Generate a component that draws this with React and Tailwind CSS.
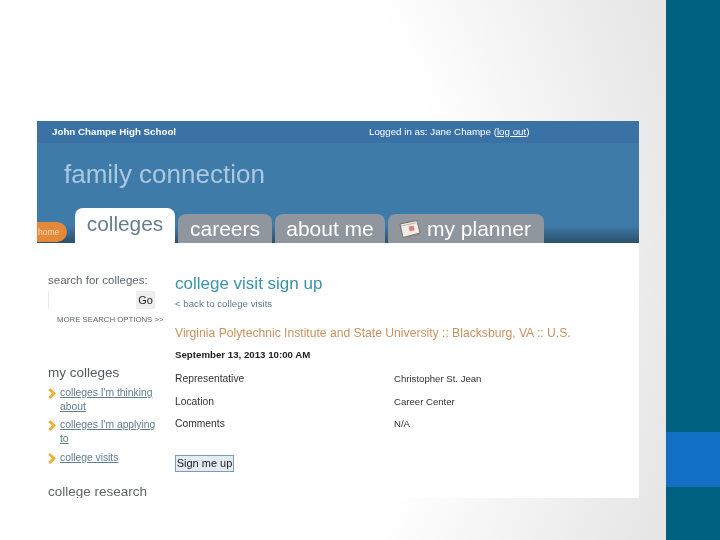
const tabs = [
  { label: "careers", width: "w-[94px]" },
  { label: "about me", width: "w-[110px]" },
];

const collegeLinks = [
  { lines: ["colleges I'm thinking", "about"], rowClass: "h-[32px]" },
  { lines: ["colleges I'm applying", "to"], rowClass: "h-[33px]" },
  { lines: ["college visits"], rowClass: "h-[16px]" },
];

const details = [
  { label: "Representative", value: "Christopher St. Jean" },
  { label: "Location", value: "Career Center" },
  { label: "Comments", value: "N/A" },
];

const Chevron = () => (
  <svg width="8" height="11" viewBox="0 0 8 11" className="mt-[2px] shrink-0">
    <path d="M1.2 1 L6 5.5 L1.2 10" fill="none" stroke="#eeb02f" strokeWidth="2.6" />
  </svg>
);

const PlannerIcon = () => (
  <svg width="22" height="20" viewBox="0 0 22 20" className="shrink-0">
    <path d="M1 5 L18 1.5 L21 14 L4 18.5 Z" fill="#f0ede8" stroke="#77706a" strokeWidth="1" />
    <path d="M2 7 L18.5 3.5" stroke="#b9b3ab" strokeWidth="1" />
    <rect x="10" y="7" width="5" height="5" fill="#d9817b" transform="rotate(-12 12 9)" />
    <path d="M4 18.5 L21 14 L21 15.5 L5 19.5 Z" fill="#8c8780" />
  </svg>
);

const Header = () => (
  <div className="bg-[#3e7ba8]">
    <div className="flex h-[22px] items-center bg-[#3a72a6] pl-[15px] text-[9.75px] text-white">
      <span className="w-[317px] font-bold">John Champe High School</span>
      <span>
        Logged in as: Jane Champe (<span className="underline">log out</span>)
      </span>
    </div>
    <div className="h-[65px] pl-[27px] pt-[16px] text-[26px] leading-[30px] text-[#a9c8e1]">
      family connection
    </div>
    <div className="flex h-[35px] items-end bg-gradient-to-b from-[#3e7ba8] from-50% to-[#2b506c]">
      <div className="mb-px flex h-[20px] w-[30px] items-center rounded-r-[10px] bg-[#e4883a] pl-px text-[8.5px] text-[#f8dcc0]">
        home
      </div>
      <div className="ml-2 flex h-[35px] w-[100px] justify-center rounded-t-[8px] bg-white pt-[4px] text-[20.8px] leading-[24px] text-[#64808c]">
        colleges
      </div>
      <div className="ml-[3px] flex gap-[3px]">
        {tabs.map((tab) => (
          <div
            key={tab.label}
            className={`flex h-[29px] items-center justify-center rounded-t-[8px] bg-[#8f969e] text-[21px] text-white ${tab.width}`}
          >
            {tab.label}
          </div>
        ))}
        <div className="flex h-[29px] w-[156px] items-center gap-[6px] rounded-t-[8px] bg-[#8f969e] pl-[11px] text-[21px] text-white">
          <PlannerIcon />
          my planner
        </div>
      </div>
    </div>
  </div>
);

const Sidebar = () => (
  <div className="w-[138px] shrink-0 pl-[11px] pt-[30px] text-[#5f6468]">
    <div className="text-[11.5px] leading-[14px]">search for colleges:</div>
    <div className="mt-[4px] flex h-[18px] items-center">
      <div className="h-[18px] w-[85px] border-l border-[#e8e8e8] bg-white" />
      <div className="ml-[3px] flex h-[18px] w-[19px] items-center justify-center bg-[#ededed] text-[11px] text-[#222222]">
        Go
      </div>
    </div>
    <div className="ml-[9px] mt-[5px] whitespace-nowrap text-[7.8px] leading-[12px]">
      MORE SEARCH OPTIONS &gt;&gt;
    </div>
    <div className="mt-[38px] text-[13.5px] leading-[18px] text-[#55595c]">my colleges</div>
    <div className="mt-[4px] flex flex-col">
      {collegeLinks.map((link) => (
        <div key={link.lines[0]} className={`flex gap-[4px] ${link.rowClass}`}>
          <Chevron />
          <div className="text-[10.3px] leading-[14px] text-[#5f7d8c] underline">
            {link.lines.map((line) => (
              <div key={line} className="whitespace-nowrap">{line}</div>
            ))}
          </div>
        </div>
      ))}
    </div>
    <div className="mt-[16px] whitespace-nowrap text-[13.5px] leading-[18px]">college research</div>
  </div>
);

const VisitDetails = () => (
  <div className="flex-1 pt-[31px]">
    <h1 className="whitespace-nowrap text-[17px] leading-[20px] text-[#3a94a8]">college visit sign up</h1>
    <div className="mt-[4px] text-[9.7px] leading-[12px] text-[#5f7d8c]">&lt; back to college visits</div>
    <div className="mt-[16px] whitespace-nowrap text-[12.15px] leading-[14px] text-[#c9925f]">
      Virginia Polytechnic Institute and State University :: Blacksburg, VA :: U.S.
    </div>
    <div className="mt-[9px] text-[9.7px] font-bold leading-[12px] text-[#222222]">
      September 13, 2013 10:00 AM
    </div>
    <div className="mt-[12px] flex flex-col gap-[10px] leading-[12.5px] text-[#333333]">
      {details.map((row) => (
        <div key={row.label} className="flex">
          <span className="w-[219px] text-[10.3px]">{row.label}</span>
          <span className="text-[9.6px]">{row.value}</span>
        </div>
      ))}
    </div>
    <div className="mt-[24px] flex h-[17px] w-[59px] items-center justify-center border border-[#7f9ab3] bg-[#e4ebf2] text-[11px] text-[#222222]">
      Sign me up
    </div>
  </div>
);

const App = () => {
  return (
    <div className="flex h-[540px] w-[720px] overflow-hidden font-['Liberation_Sans',Arial,sans-serif]">
      <div className="h-full w-[666px] bg-[radial-gradient(circle_at_-45px_270px,#ffffff_495px,#e6e6e6_740px)] pl-[37px] pt-[121px]">
        <div className="h-[377px] w-[602px] overflow-hidden bg-white blur-[0.4px]">
          <Header />
          <div className="flex">
            <Sidebar />
            <VisitDetails />
          </div>
        </div>
      </div>
      <div className="flex h-full w-[54px] flex-col bg-[#00607f]">
        <div className="mt-[432px] h-[55px] bg-[#1170c4]" />
      </div>
    </div>
  );
};

export default App;
